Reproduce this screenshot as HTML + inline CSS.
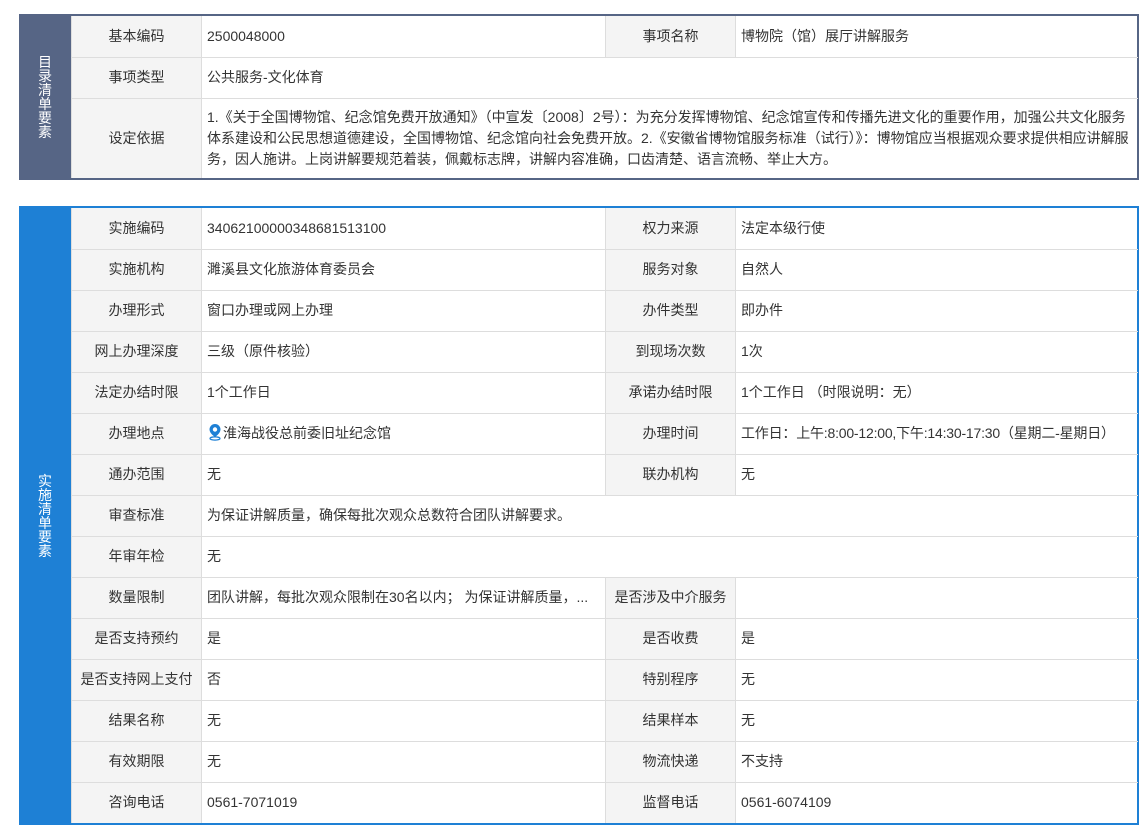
<!DOCTYPE html>
<html><head><meta charset="utf-8"><style>
*{margin:0;padding:0;box-sizing:border-box}
body{width:1147px;height:840px;background:#fff;font-family:"Liberation Sans","Noto Sans CJK SC",sans-serif;font-size:14px;color:#333;position:relative;overflow:hidden}
.blk{position:absolute;left:19px;width:1120px;border:2px solid #566585;border-left:none;overflow:visible}
.side{position:absolute;left:0;top:-2px;bottom:-2px;width:52px;background:#566585;color:#fff;display:flex;align-items:center;justify-content:center}
.side span{width:14px;line-height:14px;font-size:14px;text-align:center;word-break:break-all}
table{position:absolute;left:52px;top:0;border-collapse:collapse;table-layout:fixed;width:1066px}
td{border:1px solid #ddd;height:41px;padding:0 5px;line-height:21px;vertical-align:middle}
tr:first-child td{border-top:none}
tr:last-child td{border-bottom:none}
td:last-child{border-right:none}
td.l{background:#f4f4f4;text-align:center}
.b2{border-color:#1e80d5}
.b2 .side{background:#1e80d5}
</style></head><body>
<div class="blk" style="top:14px;height:166px">
<div class="side"><span>目录清单要素</span></div>
<table><colgroup><col style="width:130px"><col style="width:404px"><col style="width:130px"><col style="width:402px"></colgroup>
<tr><td class="l">基本编码</td><td>2500048000</td><td class="l">事项名称</td><td>博物院（馆）展厅讲解服务</td></tr>
<tr><td class="l">事项类型</td><td colspan="3">公共服务-文化体育</td></tr>
<tr><td class="l" style="height:80px">设定依据</td><td colspan="3">1.《关于全国博物馆、纪念馆免费开放通知》（中宣发〔2008〕2号）：为充分发挥博物馆、纪念馆宣传和传播先进文化的重要作用，加强公共文化服务体系建设和公民思想道德建设，全国博物馆、纪念馆向社会免费开放。2.《安徽省博物馆服务标准（试行）》：博物馆应当根据观众要求提供相应讲解服务，因人施讲。上岗讲解要规范着装，佩戴标志牌，讲解内容准确，口齿清楚、语言流畅、举止大方。</td></tr>
</table></div>
<div class="blk b2" style="top:206px;height:619px">
<div class="side"><span>实施清单要素</span></div>
<table><colgroup><col style="width:130px"><col style="width:404px"><col style="width:130px"><col style="width:402px"></colgroup>
<tr><td class="l">实施编码</td><td>340621000003486815131​00</td><td class="l">权力来源</td><td>法定本级行使</td></tr>
<tr><td class="l">实施机构</td><td>濉溪县文化旅游体育委员会</td><td class="l">服务对象</td><td>自然人</td></tr>
<tr><td class="l">办理形式</td><td>窗口办理或网上办理</td><td class="l">办件类型</td><td>即办件</td></tr>
<tr><td class="l">网上办理深度</td><td>三级（原件核验）</td><td class="l">到现场次数</td><td>1次</td></tr>
<tr><td class="l">法定办结时限</td><td>1个工作日</td><td class="l">承诺办结时限</td><td>1个工作日 （时限说明：无）</td></tr>
<tr><td class="l">办理地点</td><td><svg width="16" height="18" viewBox="0 0 16 18" style="vertical-align:-3px"><path d="M8 1a5.5 5.5 0 0 0-5.5 5.5C2.5 10.5 8 14 8 14s5.5-3.5 5.5-7.5A5.5 5.5 0 0 0 8 1z" fill="#1e80d5"/><circle cx="8" cy="6.5" r="2.2" fill="#fff"/><ellipse cx="8" cy="15.5" rx="5" ry="1.6" fill="none" stroke="#1e80d5" stroke-width="1.2"/></svg>淮海战役总前委旧址纪念馆</td><td class="l">办理时间</td><td style="white-space:nowrap;letter-spacing:-0.2px">工作日：上午:8:00-12:00,下午:14:30-17:30（星期二-星期日）</td></tr>
<tr><td class="l">通办范围</td><td>无</td><td class="l">联办机构</td><td>无</td></tr>
<tr><td class="l">审查标准</td><td colspan="3">为保证讲解质量，确保每批次观众总数符合团队讲解要求。</td></tr>
<tr><td class="l">年审年检</td><td colspan="3">无</td></tr>
<tr><td class="l">数量限制</td><td style="white-space:nowrap;overflow:hidden">团队讲解，每批次观众限制在30名以内； 为保证讲解质量，...</td><td class="l">是否涉及中介服务</td><td></td></tr>
<tr><td class="l">是否支持预约</td><td>是</td><td class="l">是否收费</td><td>是</td></tr>
<tr><td class="l">是否支持网上支付</td><td>否</td><td class="l">特别程序</td><td>无</td></tr>
<tr><td class="l">结果名称</td><td>无</td><td class="l">结果样本</td><td>无</td></tr>
<tr><td class="l">有效期限</td><td>无</td><td class="l">物流快递</td><td>不支持</td></tr>
<tr><td class="l">咨询电话</td><td>0561-7071019</td><td class="l">监督电话</td><td>0561-6074109</td></tr>
</table></div>
</body></html>
